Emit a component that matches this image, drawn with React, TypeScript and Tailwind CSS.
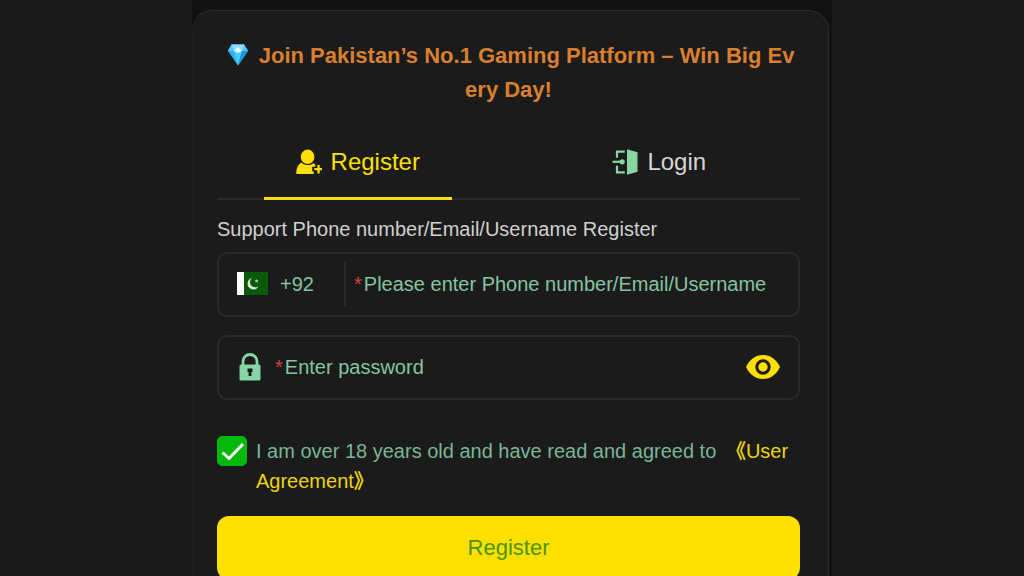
import React, { useState } from 'react';

const tabs = [
    { id: 'register', label: 'Register' },
    { id: 'login', label: 'Login' },
];

function DiamondIcon() {
    return (
        <svg viewBox="0 0 30 24" className="inline-block w-[30px] h-6 align-[-4px]" aria-hidden="true">
            <path d="M8.500 1.500h12.500l4 6.500-10 14.500L5 8z" fill="#29b6f6" />
            <path d="M8.500 1.500h12.500l4 6.500H5z" fill="#8fdcf8" />
            <path d="M8.500 1.500l2.500 6.500H5zM21 1.500L19 8h6z" fill="#4fc3f7" />
            <path d="M11 8l4-4 4 4-4 3z" fill="#e8faff" />
            <path d="M11 8l4 2 4-2-4 14.500z" fill="#4dd0fb" />
            <path d="M19 8h6L15 22.500z" fill="#1e96dc" />
        </svg>
    );
}

function UserPlusIcon() {
    return (
        <svg viewBox="0 0 26 26" className="w-[26px] h-[26px]" fill="currentColor" aria-hidden="true">
            <ellipse cx="11.600" cy="7.800" rx="6.800" ry="7.200" />
            <path d="M5.300 13.600c1.700 1.700 3.800 2.500 6.300 2.500 2.400 0 4.300-.7 5.900-2.200.9.500 1.500 1.200 1.900 2v1.800h-3.200v4.600h1.500V25H1.500C.7 25 .1 24.500.2 23.700c.3-4.600 1.900-8.300 5.100-10.100z" />
            <path d="M21.400 16h2.300v3h2.900v2.300h-2.900v3.100h-2.300v-3.100h-3v-2.300h3z" />
        </svg>
    );
}

function DoorIcon() {
    return (
        <svg viewBox="0 0 26 26" className="w-[26px] h-[26px] text-[#86d6a4]" aria-hidden="true">
            <path d="M15 .3L25.500 3.200v19.600L15 25.700z" fill="currentColor" />
            <path d="M12.800 2.700H5v6.100M5 16.800v6.500h7.800" fill="none" stroke="currentColor" strokeWidth="2.200" />
            <path d="M.5 12.800h9" stroke="currentColor" strokeWidth="2.200" />
            <circle cx="10.200" cy="12.800" r="2.600" fill="currentColor" />
        </svg>
    );
}

function PakistanFlag() {
    return (
        <svg viewBox="0 0 31 23" className="w-[31px] h-[23px]" aria-hidden="true">
            <path d="M0 0h31v23H0z" fill="#0b5a0b" />
            <path d="M0 0h7v23H0z" fill="#fff" />
            <path d="M15 6a5.800 5.800 0 1 0 6.600 8.200A5 5 0 1 1 15 6z" fill="#d5e8d5" />
            <path d="M19.600 6.900l.6 1.300 1.400.1-1 1 .3 1.400-1.300-.7-1.200.7.2-1.400-1-1 1.400-.1z" fill="#b4d2b4" />
        </svg>
    );
}

function LockIcon() {
    return (
        <svg viewBox="0 0 22 28" className="w-[22px] h-7 text-[#86d6a4]" aria-hidden="true">
            <path d="M4 13V8.500a7 7 0 0 1 14 0V13" fill="none" stroke="currentColor" strokeWidth="2.800" />
            <path d="M2 11.500h18a1.500 1.500 0 0 1 1.500 1.500v13a1.500 1.500 0 0 1-1.500 1.500H2A1.500 1.500 0 0 1 .5 26V13A1.500 1.500 0 0 1 2 11.500z" fill="currentColor" />
            <path d="M8.500 15.500h5v3.600h-1.100V23H9.600v-3.900H8.500z" fill="#1b1b1b" />
        </svg>
    );
}

function EyeIcon() {
    return (
        <svg viewBox="0 0 34 24" className="w-[34px] h-6" aria-hidden="true">
            <path d="M17 0c7.500 0 13.500 4.600 17 12-3.500 7.400-9.500 12-17 12S3.500 19.400 0 12C3.500 4.600 9.500 0 17 0z" fill="#fde000" />
            <circle cx="17" cy="12" r="6.200" fill="none" stroke="#1f1d10" strokeWidth="3" />
        </svg>
    );
}

export default function App() {
    const [tab, setTab] = useState('register');
    const [account, setAccount] = useState('');
    const [password, setPassword] = useState('');
    const [showPassword, setShowPassword] = useState(false);
    const [agreed, setAgreed] = useState(true);

    return (
        <div className="h-screen overflow-hidden bg-[#191919] font-['Liberation_Sans','Noto_Sans_CJK_SC',sans-serif] text-xl">
            <div className="max-w-[640px] min-h-full mx-auto bg-[#111111] pt-[10px] pr-[3px]">
                <main className="min-h-screen rounded-t-[20px] border border-b-0 border-[#2a2a2a] border-l-[#1f1f1f] bg-[#1b1b1b] pt-7 pl-6 pr-7">
                    <h1 className="text-[22px] leading-[34px] font-bold text-center break-all text-[#d97f2e]">
                        <DiamondIcon /> Join Pakistan’s No.1 Gaming Platform – Win Big Every Day!
                    </h1>

                    {/* Tabs */}
                    <div role="tablist" className="mt-4 grid grid-cols-2 gap-5 border-b-2 border-[#2c2c2c]">
                        {tabs.map((item) => (
                            <button
                                key={item.id}
                                type="button"
                                role="tab"
                                aria-selected={tab === item.id}
                                onClick={() => setTab(item.id)}
                                className={`relative flex h-[75px] items-center justify-center gap-[9px] pt-0.5 text-2xl cursor-pointer ${tab === item.id ? 'text-[#fde000]' : 'text-[#d6d6d6]'}`}
                            >
                                {item.id === 'register' ? <UserPlusIcon /> : <DoorIcon />}
                                <span>{item.label}</span>
                                {tab === item.id && (
                                    <span className="absolute -bottom-0.5 left-1/6 w-2/3 h-[3px] bg-[#fbdc12]"></span>
                                )}
                            </button>
                        ))}
                    </div>

                    <form onSubmit={(e) => e.preventDefault()}>
                        <label htmlFor="account" className="block mt-3.5 mb-2 leading-[30px] text-[#d0d0d0]">
                            Support Phone number/Email/Username Register
                        </label>
                        <div className="flex h-[65px] items-center rounded-[10px] border-2 border-[#2a2a2a] pl-[18px] pr-[18px] pb-0.5">
                            <button type="button" className="flex h-[46px] w-[109px] shrink-0 items-center gap-3 border-r-2 border-[#2a2a2a] text-[#84c4a0] cursor-pointer">
                                <PakistanFlag />
                                <span>+92</span>
                            </button>
                            <span className="ml-2 mr-0.5 text-[#d8442f]">*</span>
                            <input
                                id="account"
                                type="text"
                                value={account}
                                onChange={(e) => setAccount(e.target.value)}
                                placeholder="Please enter Phone number/Email/Username"
                                className="min-w-0 flex-1 bg-transparent text-[#84c4a0] placeholder:text-[#84c4a0] outline-none"
                            />
                        </div>

                        <div className="mt-[18px] flex h-[65px] items-center rounded-[10px] border-2 border-[#2a2a2a] pl-5 pr-[18px] pb-0.5">
                            <label htmlFor="password" className="flex items-center gap-3.5">
                                <LockIcon />
                                <span className="mr-0.5 text-[#d8442f]">*</span>
                            </label>
                            <input
                                id="password"
                                aria-label="Enter password"
                                type={showPassword ? 'text' : 'password'}
                                value={password}
                                onChange={(e) => setPassword(e.target.value)}
                                placeholder="Enter password"
                                className="min-w-0 flex-1 bg-transparent text-[#84c4a0] placeholder:text-[#84c4a0] outline-none"
                            />
                            <button type="button" aria-label="Show password" onClick={() => setShowPassword(!showPassword)} className="cursor-pointer">
                                <EyeIcon />
                            </button>
                        </div>

                        {/* Terms */}
                        <div className="mt-9 flex items-start gap-[9px] leading-[30px]">
                            <span className="relative h-[30px] w-[30px] shrink-0">
                                <input
                                    id="agree"
                                    type="checkbox"
                                    checked={agreed}
                                    onChange={(e) => setAgreed(e.target.checked)}
                                    className="peer block h-[30px] w-[30px] appearance-none rounded-[5px] border border-[#04b80c] checked:bg-[#04b80c]"
                                />
                                <svg viewBox="0 0 30 30" className="pointer-events-none absolute inset-0 hidden peer-checked:block" aria-hidden="true">
                                    <path d="M5.500 16.500l6.500 6L26 8" fill="none" stroke="#fff" strokeWidth="3" />
                                </svg>
                            </span>
                            <p className="text-[#7ab695]">
                                <label htmlFor="agree">I am over 18 years old and have read and agreed to</label>{' '}
                                <a href="#agreement" className="ml-1 text-[#ecd312]">
                                    <span className="font-bold">《</span>User Agreement<span className="font-bold">》</span>
                                </a>
                            </p>
                        </div>

                        <button type="submit" className="mt-5 h-16 w-full rounded-xl bg-[#fde000] text-[22px] text-[#4a940e] cursor-pointer">
                            Register
                        </button>
                    </form>
                </main>
            </div>
        </div>
    );
}
